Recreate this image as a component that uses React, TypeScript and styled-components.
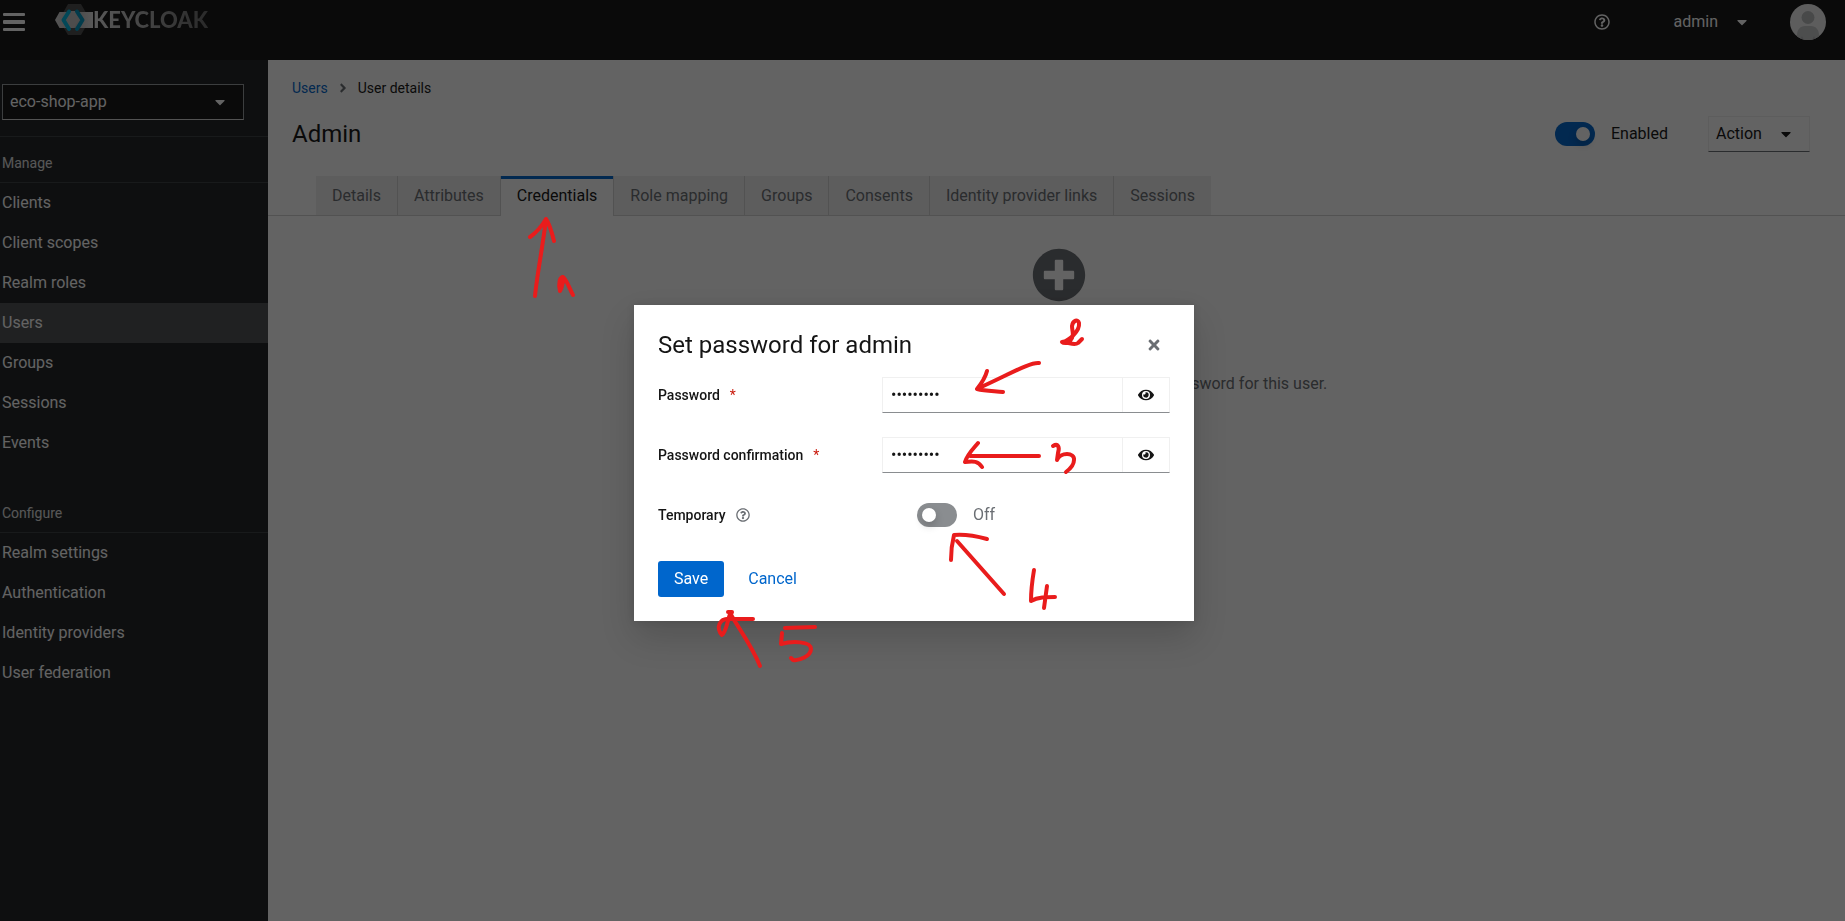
import React from "react";
import styled, { createGlobalStyle } from "styled-components";
import {
  FaAngleRight,
  FaCaretDown,
  FaEye,
  FaPlusCircle,
  FaRegQuestionCircle,
  FaTimes,
} from "react-icons/fa";

const GlobalStyle = createGlobalStyle`
  *, *::before, *::after { box-sizing: border-box; }
  body {
    margin: 0;
    background: #fff;
    color: #151515;
    font-family: Roboto, "Liberation Sans", sans-serif;
    font-size: 16px;
    line-height: 24px;
  }
  button, input, select { font: inherit; color: inherit; margin: 0; }
  button, select { cursor: pointer; }
  h1, h2, p, ul, ol { margin: 0; padding: 0; font-weight: 400; }
  ul, ol { list-style: none; }
  a { text-decoration: none; }
  svg { display: block; flex: none; }
`;

const Page = styled.div`
  display: grid;
  grid-template-columns: 268px 1fr;
  grid-template-rows: 60px 1fr;
  min-height: 100vh;
`;

/* Masthead */

const Masthead = styled.header`
  grid-column: 1 / -1;
  display: flex;
  align-items: flex-start;
  padding: 4px 19px 0 3px;
  background: #151515;
  color: #fff;
`;

const PlainButton = styled.button`
  display: flex;
  align-items: center;
  gap: 16px;
  height: 36px;
  padding: 0;
  border: 0;
  background: none;
`;

const Brand = styled.a`
  display: flex;
  align-items: center;
  height: 32px;
  margin-left: 30px;
`;

const BrandName = styled.span`
  font-family: Lato, sans-serif;
  font-size: 22px;
  font-weight: 900;
  line-height: 32px;
  background: linear-gradient(90deg, #e4e4e4, #6a6a6a);
  background-clip: text;
  color: transparent;
`;

const Tools = styled.div`
  display: flex;
  margin-left: auto;
`;

const UserButton = styled(PlainButton)`
  margin: 0 40px 0 64px;
`;

/* Sidebar */

const Sidebar = styled.nav`
  padding-top: 24px;
  background: #212427;
  color: #fff;
`;

const RealmPicker = styled.div`
  display: grid;
  align-items: center;
  margin: 0 24px 16px 2px;

  select, svg { grid-area: 1 / 1; }
  svg { justify-self: end; margin-right: 16px; pointer-events: none; }
`;

const RealmSelect = styled.select`
  appearance: none;
  width: 100%;
  height: 36px;
  padding: 0 7px;
  border: 1px solid #9a9da0;
  border-bottom-color: #d2d2d2;
  border-radius: 0;
  background: #151515;
`;

const NavSection = styled.section`
  & + & { margin-top: 24px; }
  &:first-of-type { border-top: 1px solid #3c3f42; }
`;

const NavTitle = styled.h2`
  padding: 16px 2px 8px;
  border-bottom: 1px solid #3c3f42;
  color: #e0e0e0;
  font-size: 14px;
  line-height: 21px;
`;

const NavLink = styled.a<{ $current?: boolean }>`
  display: block;
  padding: 8px 2px;
  background: ${(p) => (p.$current ? "#4f5255" : "transparent")};
  color: #fff;
`;

/* Main area */

const Main = styled.main`
  min-width: 0;
  padding-top: 16px;
`;

const Breadcrumb = styled.ol`
  display: flex;
  align-items: center;
  gap: 8px;
  padding-left: 24px;
  font-size: 14px;

  li { display: flex; align-items: center; gap: 8px; }
  a { color: #06c; }
  svg { color: #6a6e73; }
`;

const TitleRow = styled.div`
  display: flex;
  align-items: center;
  margin: 16px 35px 24px 24px;
`;

const PageTitle = styled.h1`
  margin-right: auto;
  font-size: 24px;
  line-height: 36px;
`;

const ActionButton = styled.button`
  display: flex;
  align-items: center;
  gap: 16px;
  width: 102px;
  height: 36px;
  margin-left: 40px;
  padding: 0 7px;
  border: 1px solid #f0f0f0;
  border-bottom-color: #6a6e73;
  background: none;
`;

const SwitchLabel = styled.label<{ $muted?: boolean }>`
  display: flex;
  align-items: center;
  gap: 16px;
  color: ${(p) => (p.$muted ? "#6a6e73" : "#151515")};
`;

const SwitchInput = styled.input`
  appearance: none;
  display: flex;
  align-items: center;
  width: 40px;
  height: 24px;
  padding: 0 5px;
  border-radius: 12px;
  background: #8a8d90;

  &::before {
    content: "";
    width: 14px;
    height: 14px;
    border-radius: 50%;
    background: #fff;
    box-shadow: 0 4px 8px rgba(3, 3, 3, 0.2);
  }
  &:checked { justify-content: flex-end; background: #06c; }
`;

const Tabs = styled.div`
  display: flex;
  height: 40px;
  padding-left: 48px;
  box-shadow: inset 0 -1px #d2d2d2;
`;

const Tab = styled.button<{ $active?: boolean }>`
  padding: 0 16px;
  border: 0;
  border-right: 1px solid #d2d2d2;
  border-bottom: ${(p) => (p.$active ? "0" : "1px solid #d2d2d2")};
  background: ${(p) => (p.$active ? "#fff" : "#f0f0f0")};
  box-shadow: ${(p) => (p.$active ? "inset 0 3px #06c" : "none")};
  color: ${(p) => (p.$active ? "#151515" : "#6a6e73")};

  &:last-child { border-right: 0; }
`;

const EmptyState = styled.div`
  display: flex;
  flex-direction: column;
  align-items: center;
  gap: 70px;
  padding: 32px 0 0 4px;
  color: #6a6e73;
`;

/* Dialog */

const Backdrop = styled.div`
  position: fixed;
  inset: 0;
  display: flex;
  align-items: center;
  justify-content: center;
  padding: 5px 17px 0 0;
  background: rgba(3, 3, 3, 0.62);
`;

const Dialog = styled.form`
  width: 560px;
  padding: 24px;
  background: #fff;
  box-shadow: 0 16px 32px rgba(3, 3, 3, 0.16), 0 0 8px rgba(3, 3, 3, 0.1);
`;

const DialogHeader = styled.header`
  display: flex;
  align-items: center;
  justify-content: space-between;
  height: 32px;
  margin-bottom: 16px;
  padding-right: 8px;

  h2 { font-size: 24px; line-height: 32px; }
  button { color: #6a6e73; }
`;

const Field = styled.div`
  display: grid;
  grid-template-columns: 224px 1fr;
  align-items: center;
  min-height: 36px;
  margin-bottom: 24px;
`;

const FieldLabel = styled.div`
  display: flex;
  align-items: center;
  gap: 10px;
  font-size: 14px;
  font-weight: 500;

  svg { color: #6a6e73; }
`;

const Required = styled.span`
  color: #c9190b;
  font-weight: 400;
`;

const PasswordGroup = styled.div`
  display: flex;
  height: 36px;
  border: 1px solid #f0f0f0;
  border-bottom-color: #8a8d90;
`;

const PasswordInput = styled.input`
  flex: 1;
  min-width: 0;
  padding: 0 8px;
  border: 0;
  outline: 0;
  background: none;
`;

const RevealButton = styled.button`
  display: grid;
  place-items: center;
  width: 47px;
  padding: 0;
  border: 0;
  border-left: 1px solid #f0f0f0;
  background: none;
`;

const SwitchCell = styled.div`
  padding-left: 35px;
`;

const DialogActions = styled.footer`
  display: flex;
  gap: 8px;
  padding-top: 4px;
`;

const DialogButton = styled.button<{ $primary?: boolean }>`
  height: 36px;
  padding: 0 16px;
  border: 0;
  border-radius: 3px;
  background: ${(p) => (p.$primary ? "#06c" : "none")};
  color: ${(p) => (p.$primary ? "#fff" : "#06c")};
`;

/* Hand-drawn step markers lie over everything else. */
const Markers = styled.svg`
  position: fixed;
  inset: 0;
  width: 100%;
  height: 100%;
  pointer-events: none;
  fill: none;
  stroke: #e91c1c;
  stroke-width: 4px;
  stroke-linecap: round;
  stroke-linejoin: round;
`;

const navigation = [
  {
    title: "Manage",
    items: ["Clients", "Client scopes", "Realm roles", "Users", "Groups", "Sessions", "Events"],
  },
  {
    title: "Configure",
    items: ["Realm settings", "Authentication", "Identity providers", "User federation"],
  },
];

const tabs = [
  "Details",
  "Attributes",
  "Credentials",
  "Role mapping",
  "Groups",
  "Consents",
  "Identity provider links",
  "Sessions",
];

const strokes = [
  // 1
  "M535 296 C537 275 543 245 546 219 M530 237 C537 232 542 226 546 219 C549 223 552 233 554 241",
  "M560 291 C558 283 560 277 563 277 C564 278 562 288 560 291 M563 277 C567 280 570 290 573 295",
  // 2
  "M1039 363 C1030 362 1010 374 977 389 M987 371 C985 379 981 384 977 389 C985 391 994 391 1003 392",
  "M1062 342 C1069 341 1080 331 1079 323 C1078 319 1073 320 1072 326 C1072 332 1075 335 1070 341 C1068 344 1063 343 1062 342 C1069 342 1074 346 1078 343 L1082 339",
  // 3
  "M1039 456 H970 M978 443 C972 450 967 455 965 462 C974 461 978 461 982 467",
  "M1053 446 C1058 443 1060 447 1058 453 L1057 460 C1060 452 1075 452 1074 460 C1074 465 1070 469 1066 472",
  // 4
  "M1004 594 L957 541 M951 560 C951 551 952 543 954 535 C965 534 976 536 987 539",
  "M1034 570 C1032 582 1031 592 1031 601 C1038 597 1046 597 1055 597 M1047 586 L1044 608",
  // 5
  "M760 666 C752 646 739 629 730 613 M728 612 L732 612 L730 617 M753 619 H732 C718 617 716 629 722 635 C726 632 727 623 730 614",
  "M785 628 L815 627 M782 633 L781 644 C792 641 811 641 811 649 C811 656 799 661 793 660 L791 658",
];

function MenuIcon() {
  return (
    <svg width="22" height="20" viewBox="0 0 22 20" fill="#fff">
      <rect y="1" width="22" height="3" rx="1" />
      <rect y="8" width="22" height="4" rx="1" />
      <rect y="16" width="22" height="3" rx="1" />
    </svg>
  );
}

function BrandMark() {
  return (
    <svg width="38" height="32" viewBox="0 0 38 32">
      <defs>
        <linearGradient id="band" x1="0" x2="1">
          <stop offset="0" stopColor="#d8d8d8" />
          <stop offset="0.5" stopColor="#b5b5b5" />
          <stop offset="1" stopColor="#e4e4e4" />
        </linearGradient>
      </defs>
      <path d="M13 0h13l8 14v3l-8 14H13L4 16z" fill="#4d4d4d" />
      <path d="M4.500 8H38v16H4.500L0 16z" fill="url(#band)" />
      <path d="M12 24L9 16l5-9h6l4 9-5 8z" fill="#c4c4c4" />
      <g fill="none" strokeWidth="4" strokeLinejoin="round" strokeLinecap="round">
        <path d="M14 7.500L8.500 16l5.500 9" stroke="#00b8e3" />
        <path d="M22 7.500L27.500 16L22 25" stroke="#0096c0" />
      </g>
    </svg>
  );
}

function Avatar() {
  return (
    <svg width="36" height="36" viewBox="0 0 36 36">
      <clipPath id="avatar">
        <circle cx="18" cy="18" r="18" />
      </clipPath>
      <g clipPath="url(#avatar)">
        <rect width="36" height="36" fill="#f0f0f0" />
        <path d="M7 36v-5c0-5 3-9 8-9h6c5 0 8 4 8 9v5z" fill="#c6c7c8" />
        <path d="M10 36l2-4 2 4zM22 36l2-4 2 4z" fill="#b0b1b3" />
        <circle cx="18" cy="13.500" r="6.500" fill="#b8babc" />
      </g>
    </svg>
  );
}

function PasswordField({ id, label }: { id: string; label: string }) {
  return (
    <Field>
      <FieldLabel>
        <label htmlFor={id}>{label}</label>
        <Required>*</Required>
      </FieldLabel>
      <PasswordGroup>
        <PasswordInput id={id} type="password" defaultValue="eco-shop1" />
        <RevealButton type="button" aria-label="Show password">
          <FaEye size={16} />
        </RevealButton>
      </PasswordGroup>
    </Field>
  );
}

export default function App() {
  return (
    <>
      <GlobalStyle />
      <Page>
        <Masthead>
          <PlainButton aria-label="Global navigation">
            <MenuIcon />
          </PlainButton>
          <Brand href="#" aria-label="Keycloak">
            <BrandMark />
            <BrandName>KEYCLOAK</BrandName>
          </Brand>
          <Tools>
            <PlainButton aria-label="Help">
              <FaRegQuestionCircle size={16} />
            </PlainButton>
            <UserButton>
              admin
              <FaCaretDown size={16} />
            </UserButton>
            <Avatar />
          </Tools>
        </Masthead>

        <Sidebar aria-label="Global">
          <RealmPicker>
            <RealmSelect aria-label="Realm" defaultValue="eco-shop-app">
              <option>eco-shop-app</option>
            </RealmSelect>
            <FaCaretDown size={16} />
          </RealmPicker>
          {navigation.map((section) => (
            <NavSection key={section.title}>
              <NavTitle>{section.title}</NavTitle>
              <ul>
                {section.items.map((item) => (
                  <li key={item}>
                    <NavLink href="#" $current={item === "Users"}>
                      {item}
                    </NavLink>
                  </li>
                ))}
              </ul>
            </NavSection>
          ))}
        </Sidebar>

        <Main>
          <Breadcrumb>
            <li>
              <a href="#">Users</a>
              <FaAngleRight size={14} />
            </li>
            <li>User details</li>
          </Breadcrumb>
          <TitleRow>
            <PageTitle>Admin</PageTitle>
            <SwitchLabel>
              <SwitchInput type="checkbox" role="switch" defaultChecked />
              Enabled
            </SwitchLabel>
            <ActionButton>
              Action
              <FaCaretDown size={16} />
            </ActionButton>
          </TitleRow>
          <Tabs role="tablist">
            {tabs.map((tab) => (
              <Tab
                key={tab}
                role="tab"
                aria-selected={tab === "Credentials"}
                $active={tab === "Credentials"}
              >
                {tab}
              </Tab>
            ))}
          </Tabs>
          <EmptyState>
            <FaPlusCircle size={54} />
            <p>This user does not have any credentials. You can set password for this user.</p>
          </EmptyState>
        </Main>
      </Page>

      <Backdrop>
        <Dialog role="dialog" aria-labelledby="dialog-title">
          <DialogHeader>
            <h2 id="dialog-title">Set password for admin</h2>
            <PlainButton type="button" aria-label="Close">
              <FaTimes size={16} />
            </PlainButton>
          </DialogHeader>
          <PasswordField id="password" label="Password" />
          <PasswordField id="confirmation" label="Password confirmation" />
          <Field>
            <FieldLabel>
              <label htmlFor="temporary">Temporary</label>
              <FaRegQuestionCircle size={14} />
            </FieldLabel>
            <SwitchCell>
              <SwitchLabel $muted>
                <SwitchInput id="temporary" type="checkbox" role="switch" />
                Off
              </SwitchLabel>
            </SwitchCell>
          </Field>
          <DialogActions>
            <DialogButton type="button" $primary>
              Save
            </DialogButton>
            <DialogButton type="button">Cancel</DialogButton>
          </DialogActions>
        </Dialog>
      </Backdrop>

      <Markers aria-hidden="true">
        {strokes.map((d) => (
          <path key={d} d={d} />
        ))}
      </Markers>
    </>
  );
}
